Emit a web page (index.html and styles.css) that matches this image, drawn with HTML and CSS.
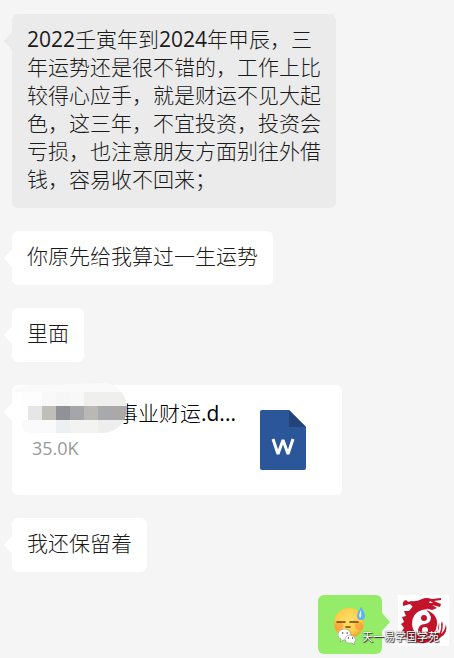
FILE: index.html
```html
<!DOCTYPE html>
<html lang="zh-CN">
<head>
    <meta charset="UTF-8">
    <meta name="viewport" content="width=device-width, initial-scale=1.0">
    <title>聊天记录</title>
    <link rel="stylesheet" href="styles.css">
</head>
<body>
    <main class="chat">
        <div class="bubble pressed"><span class="num">2022</span>壬寅年到<span class="num">2024</span>年甲辰，三年运势还是很不错的，工作上比较得心应手，就是财运不见大起色，这三年，不宜投资，投资会亏损，也注意朋友方面别往外借钱，容易收不回来；</div>
        <div class="bubble">你原先给我算过一生运势</div>
        <div class="bubble">里面</div>
        <div class="bubble file">
            <div class="file-info">
                <div class="file-name">事业财运<span class="num">.d...</span></div>
                <div class="file-size num">35.0K</div>
            </div>
            <svg class="file-icon" viewBox="0 0 46 60" aria-hidden="true">
                <path d="M2 0H29L46 17V58Q46 60 44 60H2Q0 60 0 58V2Q0 0 2 0Z" fill="#2b579a"/>
                <path d="M29 0L46 17H29Z" fill="#234479"/>
                <path d="M13 29L18 44L23 30L28 44L33 29" fill="none" stroke="#fff" stroke-width="3" stroke-linejoin="bevel"/>
            </svg>
            <!-- mosaic over the name -->
            <svg class="mosaic" viewBox="0 0 116 51" aria-hidden="true">
                <clipPath id="blur"><path d="M0 7Q16 1 34 2L90 0A24 25 0 0 1 92 50H20Q12 50 10 46V9H0Z"/></clipPath>
                <g clip-path="url(#blur)">
                    <rect width="116" height="51" fill="#fafafa"/>
                    <g shape-rendering="crispEdges">
                        <rect x="10" y="9" width="20" height="14" fill="#fdfdfd"/>
                        <rect x="30" y="9" width="14" height="14" fill="#f9f9f9"/>
                        <rect x="44" y="9" width="14" height="14" fill="#f5f6f6"/>
                        <rect x="58" y="9" width="14" height="14" fill="#f8f8f8"/>
                        <rect x="72" y="9" width="44" height="14" fill="#efefee"/>
                        <rect x="10" y="23" width="6" height="14" fill="#fff"/>
                        <rect x="16" y="23" width="14" height="14" fill="#e6e6e6"/>
                        <rect x="30" y="23" width="14" height="14" fill="#c0beb9"/>
                        <rect x="44" y="23" width="14" height="14" fill="#909298"/>
                        <rect x="58" y="23" width="14" height="14" fill="#a5a6a9"/>
                        <rect x="72" y="23" width="14" height="14" fill="#b9b8b4"/>
                        <rect x="86" y="23" width="14" height="14" fill="#a8a9ac"/>
                        <rect x="100" y="23" width="16" height="14" fill="#aaa9a8"/>
                        <rect x="44" y="37" width="14" height="14" fill="#edf0f2"/>
                        <rect x="58" y="37" width="28" height="14" fill="#f3f3f2"/>
                        <rect x="86" y="37" width="30" height="14" fill="#eeeeee"/>
                    </g>
                </g>
            </svg>
        </div>
        <div class="bubble">我还保留着</div>
        <div class="reply">
            <div class="bubble mine">
                <svg class="emoji" viewBox="0 0 32 32" role="img" aria-label="汗">
                    <defs>
                        <radialGradient id="face" cx="50%" cy="38%" r="62%">
                            <stop offset="0" stop-color="#ffdf66"/>
                            <stop offset=".7" stop-color="#fdcb48"/>
                            <stop offset="1" stop-color="#ee9a30"/>
                        </radialGradient>
                    </defs>
                    <circle cx="15" cy="16" r="15" fill="url(#face)"/>
                    <circle cx="5" cy="19" r="4" fill="#fb7f35" opacity=".45"/>
                    <circle cx="25" cy="19" r="4" fill="#fb7f35" opacity=".45"/>
                    <path d="M3 15H11M16 15H24M12 20H16" stroke="#6b421b" stroke-width="1.600" stroke-linecap="round"/>
                    <path d="M27 0Q23 6 23 9A4 4 0 0 0 31 9Q31 6 27 0Z" fill="#5fb2ee"/>
                    <path d="M27 3Q24 8 26 11Q28 10 27 3Z" fill="#d8f0ff"/>
                </svg>
            </div>
            <svg class="avatar" viewBox="0 0 51 51" role="img" aria-label="头像">
                <rect width="51" height="51" fill="#fff"/>
                <g fill="#c2132b">
                    <!-- head and horns -->
                    <path d="M5 11Q4 6 8 5Q10 8 13 6Q18 7 24 4Q28 2 34 4L43 3L43 5L36 6L43 9L42 12L34 10L39 13L34 15L27 13L17 14L12 9Z"/>
                    <!-- coiled body -->
                    <path d="M16 10Q25 10 30 14L24 15Q14 18 14 29Q15 41 27 43Q35 42 38 36L41 39Q36 47 27 48Q17 49 10 43L6 42L8 39L4 36L6 33L3 29L6 27L4 22L8 21L6 16L11 16Z"/>
                    <path d="M28 15Q40 19 39 30Q38 40 27 42Q20 41 20 35Q21 29 27 29Q33 28 33 22Q32 18 28 15Z"/>
                    <circle cx="26" cy="23" r="3"/>
                    <!-- tail -->
                    <path d="M41 27Q42 33 39 38L41 39Q44 34 43 29L44 26Q46 32 43 39Q47 36 48 29Q50 38 43 42Q38 47 31 48L39 41Z"/>
                </g>
                <circle cx="27" cy="35" r="3" fill="#fff"/>
                <path d="M32 6L35 8L31 8Z" fill="#fff"/>
            </svg>
            <div class="watermark">
                <svg class="wechat" viewBox="0 0 18 16" aria-hidden="true">
                    <path d="M7 0C3 0 0 2 0 6Q0 9 3 10L2 13L5 11Q12 12 13 6Q12 0 7 0Z" fill="#fff" stroke="#777" stroke-width=".5"/>
                    <path d="M12 6C9 6 7 8 7 10.500Q8 15 14 14L16 16L16 14Q18 12 17.500 10Q16 6 12 6Z" fill="#fff" stroke="#777" stroke-width=".5"/>
                    <path d="M4 4H5.300M8.500 4H9.800M10 9H11M14 9H15" stroke="#555" stroke-width="1.300"/>
                </svg>
                <span>天一易学国学苑</span>
            </div>
        </div>
    </main>
</body>
</html>
```

FILE: styles.css
```css
* {
    box-sizing: border-box;
}
body {
    margin: 0;
    background: #f5f5f5;
    color: #1a1a1a;
    font-family: "Open Sans", "Noto Sans CJK SC", sans-serif;
    font-size: 21px;
    font-weight: 300;
    line-height: 28px;
}
.num {
    font-weight: 400;
}
.chat {
    display: flex;
    flex-direction: column;
    align-items: flex-start;
    gap: 23px;
    padding: 14px 5px 4px 12px;
}
.bubble {
    position: relative;
    max-width: 324px;
    padding: 11px 15px 15px;
    border-radius: 6px;
    background: #fff;
}
.bubble::before {
    content: "";
    position: absolute;
    top: 18px;
    left: -8px;
    width: 8px;
    height: 18px;
    background: inherit;
    clip-path: polygon(100% 0, 0 50%, 100% 100%);
}
.pressed, .pressed::before {
    background: #ebebeb;
}
.file {
    display: flex;
    justify-content: space-between;
    width: 330px;
    max-width: 100%;
    min-height: 110px;
    padding: 14px 36px 24px 20px;
}
.file-name {
    padding-left: 85px;
    color: #000;
}
.file-size {
    margin-top: 7px;
    color: #999;
    font-size: 18px;
}
.file-icon {
    width: 46px;
    height: 60px;
    margin-top: 11px;
}
.mosaic {
    position: absolute;
    top: -2px;
    left: 0;
    width: 116px;
    height: 51px;
}
.reply {
    position: relative;
    display: flex;
    align-self: flex-end;
    align-items: flex-start;
    gap: 16px;
}
.mine {
    padding: 12px 16px 15px;
    background: #95ec69;
}
.mine::before {
    left: auto;
    right: -8px;
    clip-path: polygon(0 0, 100% 50%, 0 100%);
}
.emoji {
    display: block;
    width: 32px;
    height: 32px;
}
.avatar {
    width: 51px;
    height: 51px;
}
.watermark {
    position: absolute;
    right: 10px;
    bottom: 8px;
    display: flex;
    align-items: center;
    gap: 6px;
    color: #fff;
    font-size: 11px;
    font-weight: 400;
    line-height: 18px;
    white-space: nowrap;
    text-shadow: 1px 1px 1px #222, 0 0 1px #222;
}
.wechat {
    width: 18px;
    height: 16px;
}
```
